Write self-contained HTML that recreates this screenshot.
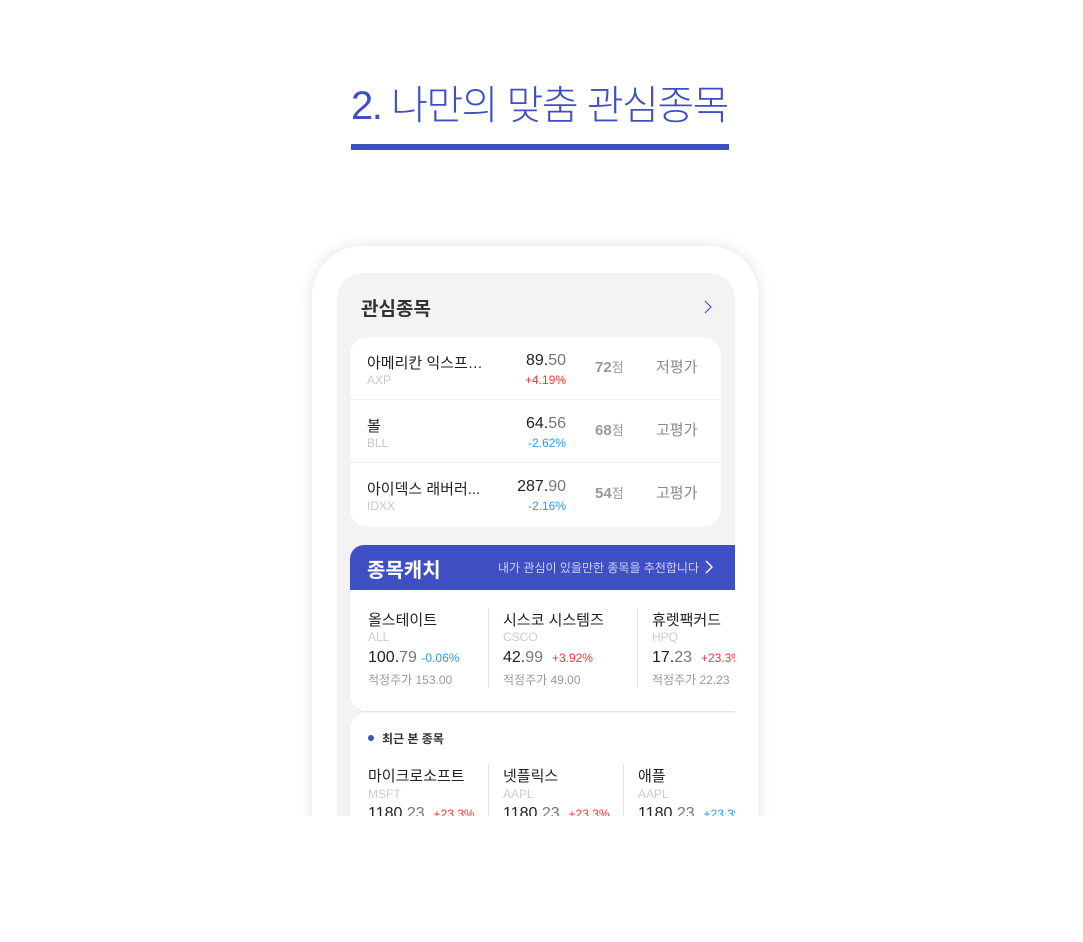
<!DOCTYPE html>
<html><head><meta charset="utf-8"><style>
*{margin:0;padding:0;box-sizing:border-box}
body{width:1083px;height:942px;background:#fff;position:relative;overflow:hidden;font-family:"Liberation Sans","Noto Sans CJK KR",sans-serif;color:#222}
.a{position:absolute;white-space:nowrap}
.title{left:0;width:1079px;text-align:center;top:78px;font-size:40px;font-weight:300;color:#3f4fc4;letter-spacing:-1.5px;line-height:56px}
.ul{left:351px;top:144px;width:378px;height:6px;background:#3f4fc4}
.clip{position:absolute;left:0;top:0;width:1083px;height:816px;overflow:hidden}
.phone{left:312px;top:246px;width:447px;height:700px;background:#fff;border-radius:50px;box-shadow:0 0 14px rgba(0,0,0,.12)}
.panel{left:337px;top:273px;width:398px;height:600px;background:#f3f3f3;border-radius:26px 26px 0 0}
.card{left:350px;top:337px;width:371px;height:190px;background:#fff;border-radius:18px}
.row{position:absolute;left:0;width:371px;height:63px;border-bottom:1px solid #eee}
.nm{left:17px;font-size:15px;color:#222}
.tk{left:17px;font-size:12px;color:#c8c8c8}
.pr{right:155px;font-size:16px;color:#222;text-align:right}
.pr span{color:#777;font-weight:300}
.ch{right:155px;font-size:12px;text-align:right}
.sc{left:245px;font-size:15px;color:#999;font-weight:bold}
.sc span{font-weight:normal;font-size:13px}
.ev{left:306px;font-size:15px;color:#888}
.red{color:#f33}.blue{color:#2a9af0}
.bar{left:350px;top:545px;width:385px;height:45px;background:#3f4fc4;border-radius:14px 0 0 0}
.w2{left:350px;top:590px;width:385px;height:122px;background:#fff;border-radius:0 0 0 16px;border-bottom:1px solid #e2e2e2}
.w3{left:350px;top:713px;width:385px;height:200px;background:#fff;border-radius:16px 0 0 0}
.sep{position:absolute;width:1px;background:#e5e5e5}
</style></head><body>
<div class="a title">2. 나만의 맞춤 관심종목</div>
<div class="a ul"></div>
<div class="clip">
<div class="a phone"></div>
<div class="a panel"></div>
<div class="a" style="left:361px;top:294px;font-size:19px;font-weight:bold;color:#333">관심종목</div>
<svg class="a" style="left:703px;top:300px" width="10" height="14"><path d="M2 1 L8 7 L2 13" stroke="#3f4fc4" stroke-width="1.1" fill="none"/></svg>
<div class="a card">
 <div class="row" style="top:0">
  <div class="a nm" style="top:15px">아메리칸 익스프…</div><div class="a tk" style="top:36px">AXP</div>
  <div class="a pr" style="top:15px">89.<span>50</span></div><div class="a ch red" style="top:36px">+4.19%</div>
  <div class="a sc" style="top:20px">72<span>점</span></div><div class="a ev" style="top:19px">저평가</div>
 </div>
 <div class="row" style="top:63px">
  <div class="a nm" style="top:15px">볼</div><div class="a tk" style="top:36px">BLL</div>
  <div class="a pr" style="top:15px">64.<span>56</span></div><div class="a ch blue" style="top:36px">-2.62%</div>
  <div class="a sc" style="top:20px">68<span>점</span></div><div class="a ev" style="top:19px">고평가</div>
 </div>
 <div class="row" style="top:126px;border:none">
  <div class="a nm" style="top:15px">아이덱스 래버러...</div><div class="a tk" style="top:36px">IDXX</div>
  <div class="a pr" style="top:15px">287.<span>90</span></div><div class="a ch blue" style="top:36px">-2.16%</div>
  <div class="a sc" style="top:20px">54<span>점</span></div><div class="a ev" style="top:19px">고평가</div>
 </div>
</div>
<div class="a bar"></div>
<div class="a" style="left:367px;top:554px;font-size:20px;font-weight:bold;color:#fff">종목캐치</div>
<div class="a" style="left:498px;top:559px;font-size:12px;color:#d0d4f2">내가 관심이 있을만한 종목을 추천합니다</div>
<svg class="a" style="left:704px;top:560px" width="10" height="14"><path d="M2 1 L8 7 L2 13" stroke="#fff" stroke-width="1.4" fill="none"/></svg>
<div class="a w2" style="overflow:hidden">
 <div class="sep" style="left:138px;top:18px;height:80px"></div>
 <div class="sep" style="left:287px;top:18px;height:80px"></div>
 <div class="a" style="left:18px;top:19px;font-size:15px">올스테이트</div>
 <div class="a" style="left:18px;top:40px;font-size:12px;color:#ccc">ALL</div>
 <div class="a" style="left:18px;top:59px;font-size:16px">100.<span style="color:#777;font-weight:300">79</span> <span class="blue" style="font-size:12px">-0.06%</span></div>
 <div class="a" style="left:18px;top:81px;font-size:12px;color:#999">적정주가 153.00</div>
 <div class="a" style="left:153px;top:19px;font-size:15px">시스코 시스템즈</div>
 <div class="a" style="left:153px;top:40px;font-size:12px;color:#ccc">CSCO</div>
 <div class="a" style="left:153px;top:59px;font-size:16px">42.<span style="color:#777;font-weight:300">99</span> &nbsp;<span class="red" style="font-size:12px">+3.92%</span></div>
 <div class="a" style="left:153px;top:81px;font-size:12px;color:#999">적정주가 49.00</div>
 <div class="a" style="left:302px;top:19px;font-size:15px">휴렛팩커드</div>
 <div class="a" style="left:302px;top:40px;font-size:12px;color:#ccc">HPQ</div>
 <div class="a" style="left:302px;top:59px;font-size:16px">17.<span style="color:#777;font-weight:300">23</span> &nbsp;<span class="red" style="font-size:12px">+23.3%</span></div>
 <div class="a" style="left:302px;top:81px;font-size:12px;color:#999">적정주가 22.23</div>
</div>
<div class="a w3" style="overflow:hidden">
 <div class="a" style="left:18px;top:22px;width:6px;height:6px;border-radius:3px;background:#3f4fc4"></div>
 <div class="a" style="left:32px;top:17px;font-size:12px;font-weight:bold;color:#333">최근 본 종목</div>
 <div class="sep" style="left:138px;top:51px;height:60px"></div>
 <div class="sep" style="left:273px;top:51px;height:60px"></div>
 <div class="a" style="left:18px;top:52px;font-size:15px">마이크로소프트</div>
 <div class="a" style="left:18px;top:74px;font-size:12px;color:#ccc">MSFT</div>
 <div class="a" style="left:18px;top:92px;font-size:16px">1180.<span style="color:#777;font-weight:300">23</span> &nbsp;<span class="red" style="font-size:12px">+23.3%</span></div>
 <div class="a" style="left:153px;top:52px;font-size:15px">넷플릭스</div>
 <div class="a" style="left:153px;top:74px;font-size:12px;color:#ccc">AAPL</div>
 <div class="a" style="left:153px;top:92px;font-size:16px">1180.<span style="color:#777;font-weight:300">23</span> &nbsp;<span class="red" style="font-size:12px">+23.3%</span></div>
 <div class="a" style="left:288px;top:52px;font-size:15px">애플</div>
 <div class="a" style="left:288px;top:74px;font-size:12px;color:#ccc">AAPL</div>
 <div class="a" style="left:288px;top:92px;font-size:16px">1180.<span style="color:#777;font-weight:300">23</span> &nbsp;<span class="blue" style="font-size:12px">+23.3%</span></div>
</div>
</div>
</body></html>
